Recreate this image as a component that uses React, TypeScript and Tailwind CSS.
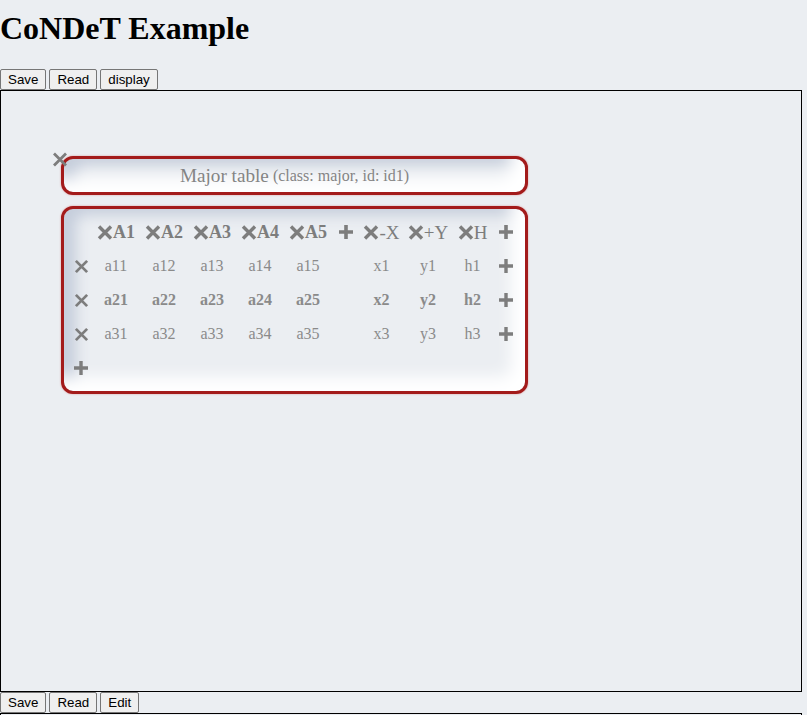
import React from "react";

const XIcon = ({ w = 16, h = 15, sw = 3.2 }: { w?: number; h?: number; sw?: number }) => (
  <svg width={w} height={h} viewBox="0 0 16 15" className="shrink-0">
    <path d="M2 1.5L14 13.5M14 1.5L2 13.5" stroke="currentColor" strokeWidth={sw} fill="none" />
  </svg>
);

const PlusIcon = ({ s = 16, sw = 3.4 }: { s?: number; sw?: number }) => (
  <svg width={s} height={s} viewBox="0 0 16 16" className="shrink-0">
    <path d="M8 1V15M1 8H15" stroke="currentColor" strokeWidth={sw} fill="none" />
  </svg>
);

const Btn = ({ label }: { label: string }) => (
  <button className="h-[21px] px-[7px] border border-[#767676] rounded-[2px] bg-[#efefef] text-black text-[13.33px] leading-[15px] font-['Liberation_Sans',Arial,sans-serif]">
    {label}
  </button>
);

const rows = [
  { a: ["a11", "a12", "a13", "a14", "a15"], x: "x1", y: "y1", h: "h1", bold: false },
  { a: ["a21", "a22", "a23", "a24", "a25"], x: "x2", y: "y2", h: "h2", bold: true },
  { a: ["a31", "a32", "a33", "a34", "a35"], x: "x3", y: "y3", h: "h3", bold: false },
];

const cardCls =
  "rounded-[12px] border-[3px] border-[#a31b1b] bg-[#ebeef2] shadow-[0_0_2px_rgba(200,40,40,0.45),inset_-14px_-14px_16px_#ffffff,inset_12px_6px_14px_#c6cedc]";

export default function App() {
  return (
    <div className="min-h-[715px] bg-[#ebeef2] text-black font-['Liberation_Serif','Times_New_Roman',serif]">
      <h1 className="m-0 pt-[10px] text-[32px] leading-[36px] font-bold">CoNDeT Example</h1>
      <div className="mt-[23px] flex gap-[3px] h-[21px]">
        <Btn label="Save" />
        <Btn label="Read" />
        <Btn label="display" />
      </div>
      <div className="w-[802px] h-[602px] border border-black pt-[65px] pl-[60px] flex flex-col gap-[11px]">
        <div className={`relative w-[467px] h-[39px] flex items-center justify-center pt-[1px] text-[#848484] ${cardCls}`}>
          <span className="absolute left-[-12px] top-[-7px] text-[#7d7d7d]">
            <XIcon w={16} h={15} sw={2.8} />
          </span>
          <span className="text-[19.2px]">Major table</span>
          <span className="text-[16px] ml-[4px]">(class: major, id: id1)</span>
        </div>
        <div className={`w-[467px] h-[188px] pt-[6px] pl-[6px] ${cardCls}`}>
          <div className="grid grid-cols-[22px_48px_48px_48px_48px_48px_27px_45px_48px_41px_26px] auto-rows-[34px] items-center text-[#8a8a8a] text-[16px]">
            <div />
            {["A1", "A2", "A3", "A4", "A5"].map((c) => (
              <div key={c} className="flex items-center justify-center text-[#7d7d7d]">
                <XIcon w={16} h={15} sw={3.4} />
                <span className="text-[18px] font-bold leading-none">{c}</span>
              </div>
            ))}
            <div className="flex justify-center text-[#7d7d7d]">
              <PlusIcon s={16} sw={3.6} />
            </div>
            {["-X", "+Y", "H"].map((c) => (
              <div key={c} className="flex items-center justify-center text-[#7d7d7d]">
                <XIcon w={16} h={15} sw={3.4} />
                <span className="text-[19px] leading-none">{c}</span>
              </div>
            ))}
            <div className="flex justify-center text-[#7d7d7d]">
              <PlusIcon s={16} sw={3.6} />
            </div>
            {rows.map((r, i) => (
              <React.Fragment key={i}>
                <div className="flex justify-center text-[#7d7d7d]">
                  <XIcon w={15} h={15} sw={3} />
                </div>
                {r.a.map((v) => (
                  <div key={v} className={`text-center ${r.bold ? "font-bold" : ""}`}>
                    {v}
                  </div>
                ))}
                <div />
                <div className={`text-center ${r.bold ? "font-bold" : ""}`}>{r.x}</div>
                <div className={`text-center ${r.bold ? "font-bold" : ""}`}>{r.y}</div>
                <div className={`text-center ${r.bold ? "font-bold" : ""}`}>{r.h}</div>
                <div className="flex justify-center text-[#7d7d7d]">
                  <PlusIcon s={16} sw={3.4} />
                </div>
              </React.Fragment>
            ))}
            <div className="flex justify-center text-[#7d7d7d]">
              <PlusIcon s={16} sw={3.4} />
            </div>
          </div>
        </div>
      </div>
      <div className="flex gap-[3px] h-[21px]">
        <Btn label="Save" />
        <Btn label="Read" />
        <Btn label="Edit" />
      </div>
      <div className="w-[802px] h-[100px] border border-black" />
    </div>
  );
}
